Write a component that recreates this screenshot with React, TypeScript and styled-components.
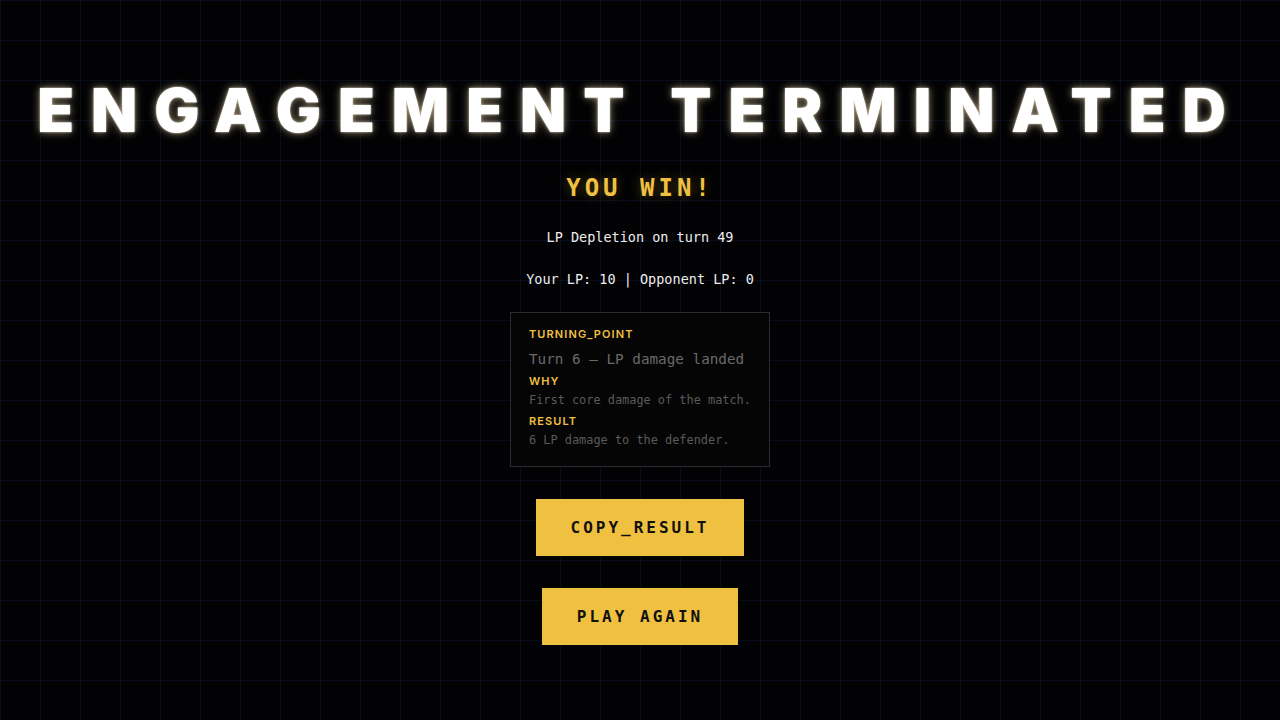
import styled, { createGlobalStyle } from "styled-components";

const GlobalStyle = createGlobalStyle`
  html, body {
    margin: 0;
    padding: 0;
    background: #000;
  }
  * {
    box-sizing: border-box;
  }
`;

const Screen = styled.div`
  width: 1280px;
  height: 720px;
  overflow: hidden;
  background-color: #020204;
  background-image:
    linear-gradient(to right, rgba(30, 60, 140, 0.17) 1px, transparent 1px),
    linear-gradient(to bottom, rgba(30, 60, 140, 0.17) 1px, transparent 1px);
  background-size: 40px 40px;
  background-position: 0 0;
  display: flex;
  flex-direction: column;
  align-items: center;
  padding-top: 74px;
  font-family: "DejaVu Sans Mono", "Liberation Mono", monospace;
`;

const Title = styled.h1`
  margin: 0;
  font-family: Inter, "Liberation Sans", sans-serif;
  font-weight: 900;
  font-size: 60px;
  line-height: 72px;
  letter-spacing: 17px;
  color: #fff;
  text-shadow: 0 0 8px rgba(255, 235, 180, 0.6), 0 0 2px rgba(255, 255, 255, 0.9);
  white-space: nowrap;
`;

const Outcome = styled.div`
  margin-top: 28px;
  color: #f0c040;
  font-weight: bold;
  font-size: 24px;
  letter-spacing: 4px;
  text-shadow: 0 0 12px rgba(240, 192, 64, 0.35);
`;

const Line = styled.div<{ $gap: number }>`
  margin-top: ${(p) => p.$gap}px;
  color: #ededed;
  font-size: 13.5px;
`;

const Card = styled.div`
  margin-top: 25px;
  width: 260px;
  padding: 14px 18px 19px;
  border: 1px solid #2c2c2c;
  background: rgba(6, 6, 6, 0.85);
  display: flex;
  flex-direction: column;
`;

const Label = styled.div<{ $top?: number }>`
  margin-top: ${(p) => p.$top ?? 0}px;
  color: #f0c040;
  font-family: Inter, "Liberation Sans", sans-serif;
  font-weight: 600;
  font-size: 11px;
  letter-spacing: 1.1px;
`;

const Headline = styled.div`
  margin-top: 10px;
  color: #6a6a6a;
  font-size: 14.3px;
`;

const Detail = styled.div`
  margin-top: 5px;
  color: #5a5a5a;
  font-size: 11.9px;
`;

const Button = styled.button<{ $top: number; $width: number }>`
  margin-top: ${(p) => p.$top}px;
  width: ${(p) => p.$width}px;
  height: 57px;
  border: none;
  background: #f0c040;
  color: #111;
  font-family: "DejaVu Sans Mono", "Liberation Mono", monospace;
  font-weight: bold;
  font-size: 16px;
  letter-spacing: 3px;
  cursor: pointer;
`;

export default function App() {
  return (
    <>
      <GlobalStyle />
      <Screen>
        <Title>ENGAGEMENT TERMINATED</Title>
        <Outcome>YOU WIN!</Outcome>
        <Line $gap={27}>LP Depletion on turn 49</Line>
        <Line $gap={26}>Your LP: 10 | Opponent LP: 0</Line>
        <Card>
          <Label>TURNING_POINT</Label>
          <Headline>Turn 6 — LP damage landed</Headline>
          <Label $top={7}>WHY</Label>
          <Detail>First core damage of the match.</Detail>
          <Label $top={7}>RESULT</Label>
          <Detail>6 LP damage to the defender.</Detail>
        </Card>
        <Button $top={32} $width={208}>COPY_RESULT</Button>
        <Button $top={32} $width={196}>PLAY AGAIN</Button>
      </Screen>
    </>
  );
}
